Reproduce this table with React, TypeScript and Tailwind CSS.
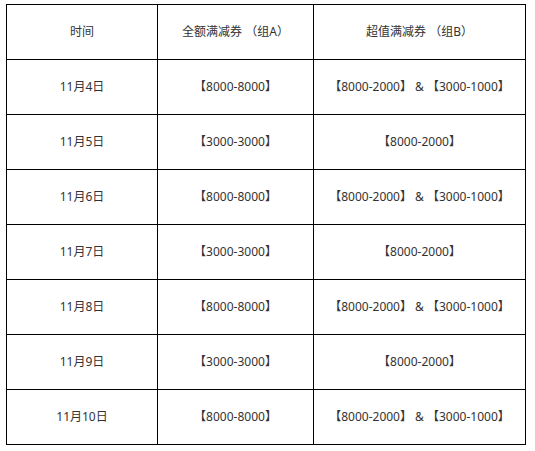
const rows = [
  { date: "11月4日", a: "【8000-8000】", b: "【8000-2000】 & 【3000-1000】" },
  { date: "11月5日", a: "【3000-3000】", b: "【8000-2000】" },
  { date: "11月6日", a: "【8000-8000】", b: "【8000-2000】 & 【3000-1000】" },
  { date: "11月7日", a: "【3000-3000】", b: "【8000-2000】" },
  { date: "11月8日", a: "【8000-8000】", b: "【8000-2000】 & 【3000-1000】" },
  { date: "11月9日", a: "【3000-3000】", b: "【8000-2000】" },
  { date: "11月10日", a: "【8000-8000】", b: "【8000-2000】 & 【3000-1000】" },
];

export default function App() {
  return (
    <div
      className="bg-white w-[535px] h-[451px] pl-[6px] pt-[4px] text-[12px] text-[#333]"
      style={{ fontFamily: '"Noto Sans", "Noto Sans CJK SC", sans-serif' }}
    >
      <table className="table-fixed border-collapse w-[519px]">
        <colgroup>
          <col className="w-[151px]" />
          <col className="w-[156px]" />
          <col className="w-[212px]" />
        </colgroup>
        <thead>
          <tr className="h-[55px]">
            <th className="border border-black font-normal text-center align-middle">时间</th>
            <th className="border border-black font-normal text-center align-middle">全额满减券 （组A）</th>
            <th className="border border-black font-normal text-center align-middle">超值满减券 （组B）</th>
          </tr>
        </thead>
        <tbody>
          {rows.map((r) => (
            <tr key={r.date} className="h-[55px]">
              <td className="border border-black text-center align-middle">{r.date}</td>
              <td className="border border-black text-center align-middle">{r.a}</td>
              <td className="border border-black text-center align-middle">{r.b}</td>
            </tr>
          ))}
        </tbody>
      </table>
    </div>
  );
}
